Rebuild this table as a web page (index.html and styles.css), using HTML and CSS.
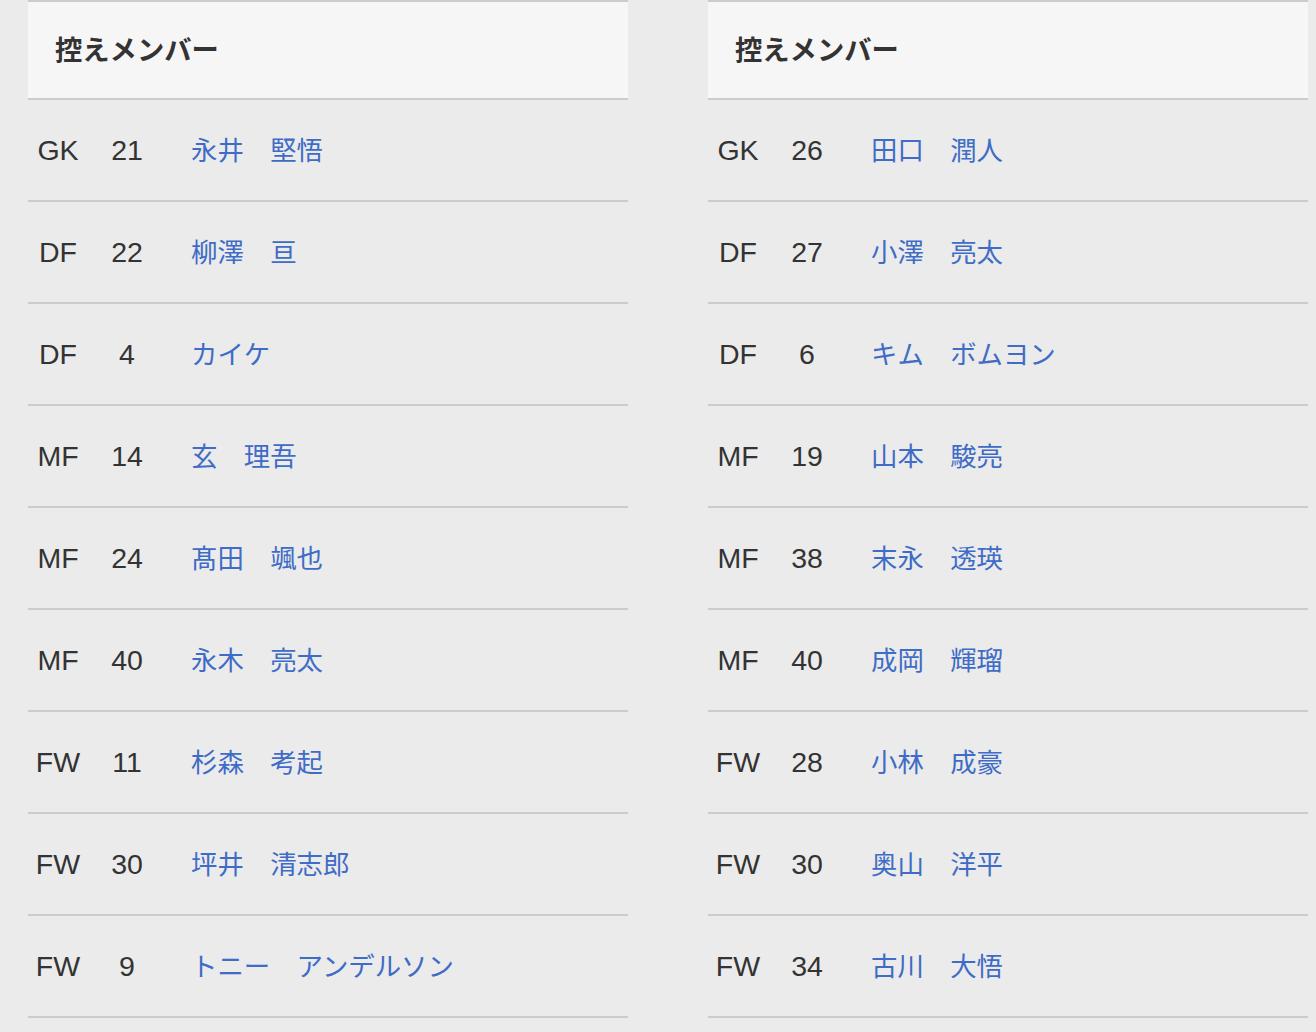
FILE: index.html
```html
<!DOCTYPE html>
<html lang="ja">
<head>
<meta charset="utf-8">
<link rel="stylesheet" href="styles.css">
</head>
<body>
<div class="page">
  <section class="squad">
    <div class="squad-head">控えメンバー</div>
    <div class="row"><span class="pos">GK</span><span class="num">21</span><a class="name">永井　堅悟</a></div>
    <div class="row"><span class="pos">DF</span><span class="num">22</span><a class="name">柳澤　亘</a></div>
    <div class="row"><span class="pos">DF</span><span class="num">4</span><a class="name">カイケ</a></div>
    <div class="row"><span class="pos">MF</span><span class="num">14</span><a class="name">玄　理吾</a></div>
    <div class="row"><span class="pos">MF</span><span class="num">24</span><a class="name">髙田　颯也</a></div>
    <div class="row"><span class="pos">MF</span><span class="num">40</span><a class="name">永木　亮太</a></div>
    <div class="row"><span class="pos">FW</span><span class="num">11</span><a class="name">杉森　考起</a></div>
    <div class="row"><span class="pos">FW</span><span class="num">30</span><a class="name">坪井　清志郎</a></div>
    <div class="row"><span class="pos">FW</span><span class="num">9</span><a class="name">トニー　アンデルソン</a></div>
  </section>
  <section class="squad">
    <div class="squad-head">控えメンバー</div>
    <div class="row"><span class="pos">GK</span><span class="num">26</span><a class="name">田口　潤人</a></div>
    <div class="row"><span class="pos">DF</span><span class="num">27</span><a class="name">小澤　亮太</a></div>
    <div class="row"><span class="pos">DF</span><span class="num">6</span><a class="name">キム　ボムヨン</a></div>
    <div class="row"><span class="pos">MF</span><span class="num">19</span><a class="name">山本　駿亮</a></div>
    <div class="row"><span class="pos">MF</span><span class="num">38</span><a class="name">末永　透瑛</a></div>
    <div class="row"><span class="pos">MF</span><span class="num">40</span><a class="name">成岡　輝瑠</a></div>
    <div class="row"><span class="pos">FW</span><span class="num">28</span><a class="name">小林　成豪</a></div>
    <div class="row"><span class="pos">FW</span><span class="num">30</span><a class="name">奥山　洋平</a></div>
    <div class="row"><span class="pos">FW</span><span class="num">34</span><a class="name">古川　大悟</a></div>
  </section>
</div>
</body>
</html>
```
FILE: styles.css
```css
html, body {
  margin: 0;
  padding: 0;
  background: #ebebeb;
}
body {
  font-family: "Liberation Sans", "Noto Sans CJK JP", sans-serif;
  color: #333333;
}
.page {
  display: flex;
  gap: 80px;
  padding-left: 28px;
}
.squad {
  width: 600px;
  border-top: 2px solid #cccccc;
}
.squad-head {
  box-sizing: border-box;
  background: #f6f6f6;
  border-bottom: 2px solid #cccccc;
  height: 98px;
  display: flex;
  align-items: center;
  padding-left: 27px;
  padding-bottom: 5px;
  font-family: "Noto Sans CJK JP", sans-serif;
  font-weight: 700;
  font-size: 27.3px;
  color: #333333;
}
.row {
  height: 102px;
  box-sizing: border-box;
  border-bottom: 2px solid #cccccc;
  display: flex;
  align-items: center;
  font-size: 28.5px;
}
.pos {
  width: 60px;
  text-align: center;
}
.num {
  width: 78px;
  text-align: center;
}
.name {
  padding-left: 25px;
  padding-bottom: 4px;
  font-family: "Noto Sans CJK JP", sans-serif;
  font-size: 26.4px;
  color: #3e6cc6;
}
```
